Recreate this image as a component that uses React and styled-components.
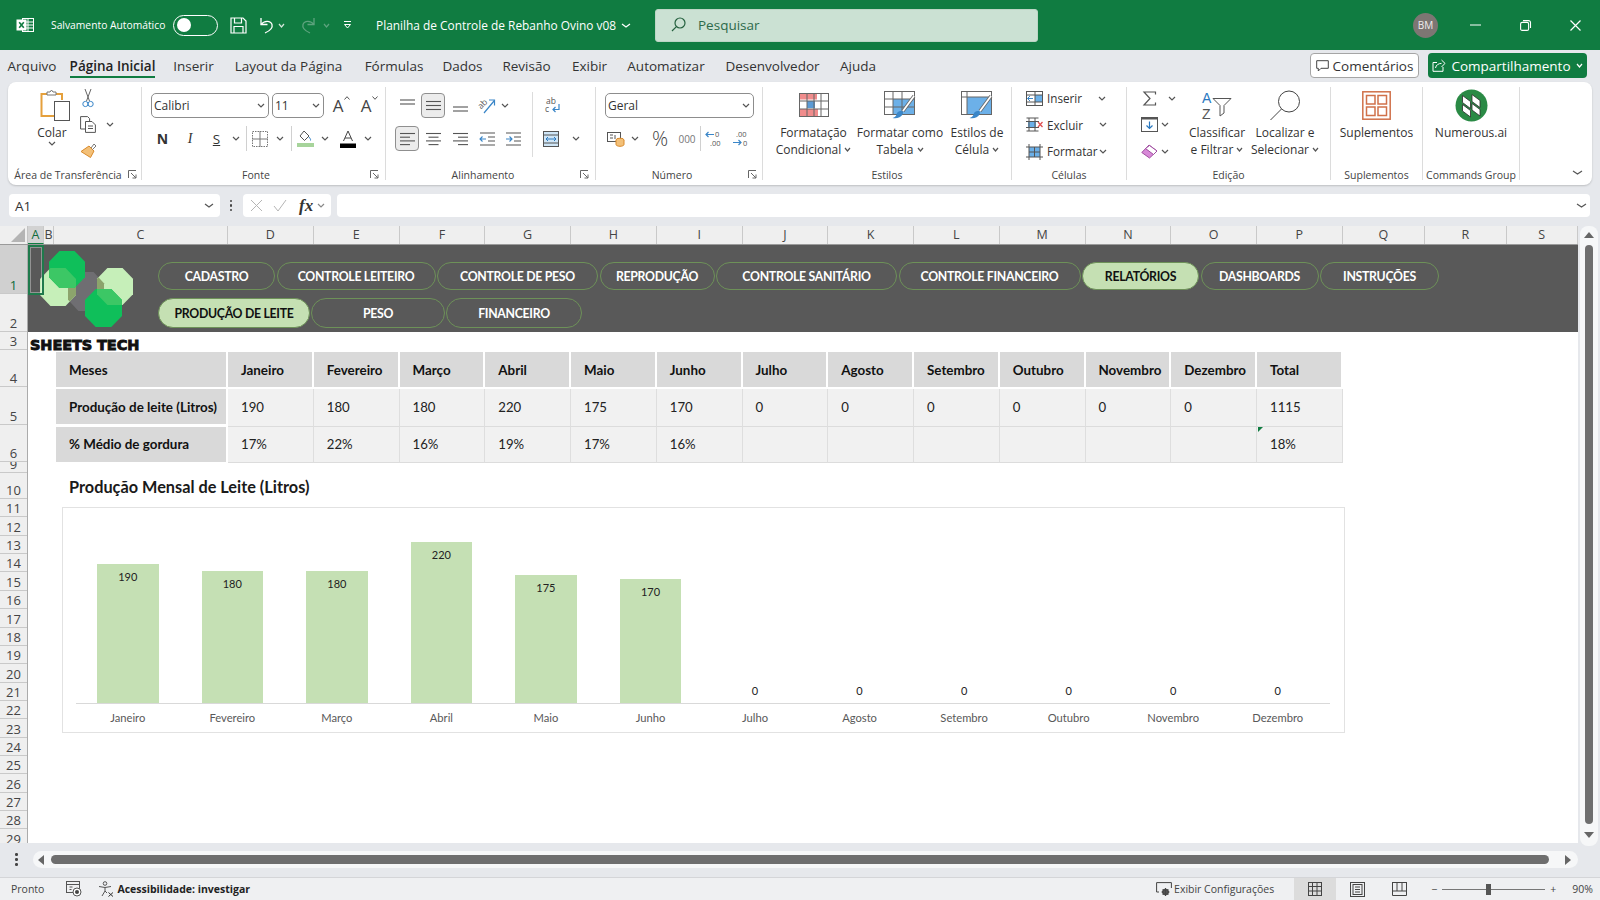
import React from 'react';
import styled, { createGlobalStyle } from 'styled-components';

const UI = `"Open Sans", "Noto Sans", "Liberation Sans", sans-serif`;
const CAL = `Lato, "Open Sans", "Liberation Sans", sans-serif`;
const GREEN = '#107c41';

const Global = createGlobalStyle`
  html, body { margin: 0; padding: 0; background: #e6e8ec; }
  * { box-sizing: border-box; }
  body { font-family: ${UI}; color: #333; }
`;

const Page = styled.div`
  width: 1600px; height: 900px; overflow: hidden; display: flex; flex-direction: column; background: #e6e8ec;
`;

/* ---------- icons ---------- */
const IconSvg = styled.svg`display: block; flex: none; overflow: visible;`;
const I = ({ w, h, c = '#555', sw = 1, children }) => (
  <IconSvg width={w} height={h} viewBox={`0 0 ${w} ${h}`} fill="none" stroke={c} strokeWidth={sw}>{children}</IconSvg>
);
const Chev = ({ c = '#555', w = 8 }) => (
  <I w={w} h={5} c={c} sw={1.2}><path d={`M1 1 L${w / 2} 4 L${w - 1} 1`} /></I>
);

const ExcelIcon = () => (
  <I w={18} h={16} c="#fff">
    <rect x="6.5" y="1.5" width="11" height="13" />
    <path d="M6 5h12M6 8h12M6 11h12M12 1v14" />
    <rect x="1" y="3" width="9" height="10" fill="#fff" />
    <path d="M3.2 5.2l4.6 5.6M7.8 5.2l-4.6 5.6" stroke={GREEN} strokeWidth="1.6" />
  </I>
);
const SaveIcon = () => (
  <I w={17} h={17} c="#fff" sw={1.2}>
    <path d="M1 1h12l3 3v12H1z" /><path d="M4.5 1v5h7V1M4 16V9.5h9V16" />
  </I>
);
const UndoIcon = ({ c = '#fff', flip }) => (
  <IconSvg width="18" height="17" viewBox="0 0 18 17" fill="none" stroke={c} strokeWidth="1.3" style={flip ? { transform: 'scaleX(-1)' } : undefined}>
    <path d="M5 1v6.5h6.5" /><path d="M5 7.5C8 3.5 14.5 3 16 7.5c1 3.5-2.5 6.5-7 8.5" />
  </IconSvg>
);
const CustomizeIcon = () => (
  <I w={9} h={10} c="#fff"><path d="M1 1.5h7" /><path d="M1.5 4.5h6L4.5 8z" fill="none" /></I>
);
const SearchIcon = () => (
  <I w={15} h={15} c="#25613f" sw={1.2}><circle cx="9" cy="6" r="5" /><path d="M5.4 9.6L1 14" /></I>
);
const MinIcon = () => <I w={11} h={2} c="#fff"><path d="M0 1h11" /></I>;
const RestoreIcon = () => (
  <I w={11} h={11} c="#fff" sw={1.1}><rect x="0.6" y="2.4" width="8" height="8" rx="1.5" /><path d="M3 .6h5.5a2 2 0 0 1 2 2V8" /></I>
);
const CloseIcon = () => <I w={11} h={11} c="#fff" sw={1.2}><path d="M.5.5l10 10M10.5.5l-10 10" /></I>;
const CommentIcon = () => (
  <I w={13} h={12} c="#444"><path d="M.7.7h11.6v7.6H5L2.3 11V8.3H.7z" /></I>
);
const ShareIcon = () => (
  <I w={14} h={13} c="#fff"><path d="M5 3.5H1v8.8h10V8" /><path d="M3.5 9c.5-3 3-4.6 6-4.6M9.5 1l3.5 3.4L9.5 8" /></I>
);
const PasteIcon = () => (
  <I w={30} h={32}>
    <path d="M8 5H1.5v22H14" stroke="#e5a03c" strokeWidth="2" />
    <path d="M15 5h7v6" stroke="#e5a03c" strokeWidth="2" />
    <path d="M7 6V3h3l1.5-2 1.5 2h3v3z" stroke="#777" fill="#fff" />
    <rect x="14.5" y="12.5" width="15" height="19" stroke="#555" fill="#fff" />
  </I>
);
const ScissorsIcon = () => (
  <I w={12} h={20} c="#666">
    <path d="M3 1l4.5 12M9 1L4.5 13" />
    <circle cx="3.4" cy="16" r="2.6" stroke="#3a86c8" /><circle cx="8.6" cy="16" r="2.6" stroke="#3a86c8" />
  </I>
);
const CopyIcon = () => (
  <I w={16} h={17} c="#555">
    <path d="M5 13H.6V.6h7l2 2V5" /><path d="M5.5 5.5h6.5l3.4 3.4v7.5H5.5z" fill="#fff" /><path d="M8 10h5M8 12.5h5" />
  </I>
);
const PainterIcon = () => (
  <I w={17} h={16}>
    <path d="M9 3l5 5-3.5 6.5L1 8.5z" fill="#f3c078" stroke="#d98a2b" />
    <path d="M11 5l3-4 2 2-3.5 3.5" stroke="#777" />
  </I>
);
const GrowIcon = ({ up }) => (
  <IconRow>
    <GlyphA>A</GlyphA>
    <I w={6} h={4} c="#555"><path d={up ? 'M.5 3.5L3 .7l2.5 2.8' : 'M.5.5L3 3.3 5.5.5'} /></I>
  </IconRow>
);
const BorderIcon = () => (
  <I w={16} h={16} c="#777">
    <rect x=".5" y=".5" width="15" height="15" strokeDasharray="1.5 1" /><path d="M8 0v16M0 8h16" />
  </I>
);
const FillIcon = () => (
  <I w={17} h={17} c="#555">
    <path d="M7 1l5 5-4.5 4.5L3 6z" /><path d="M12 7c1 1.5 2 2.5 1.5 3.5" stroke="#3a86c8" />
    <rect x="0" y="13" width="17" height="4" fill="#a7d49b" stroke="none" />
  </I>
);
const FontColorIcon = () => (
  <I w={16} h={18} c="#444">
    <path d="M3.5 11L8 1l4.5 10M5 8h6" />
    <rect x="0" y="13.5" width="16" height="4.5" fill="#000" stroke="none" />
  </I>
);
const LinesV = ({ ys }) => (
  <I w={15} h={15} c="#555" sw={1.1}>
    {ys.map(y => <path key={y} d={`M0 ${y}h15`} />)}
  </I>
);
const LinesH = ({ mode }) => {
  const seg = [15, 10, 15, 10];
  return (
    <I w={15} h={14} c="#555" sw={1.1}>
      {seg.map((l, i) => {
        const x = mode === 'left' ? 0 : mode === 'right' ? 15 - l : (15 - l) / 2;
        return <path key={i} d={`M${x} ${1.5 + i * 3.7}h${l}`} />;
      })}
    </I>
  );
};
const IndentIcon = ({ dir }) => (
  <I w={15} h={14} c="#555" sw={1.1}>
    <path d="M0 1h15M0 13h15M8 5h7M8 9h7" />
    <path d={dir === 'out' ? 'M6 7H0M2.5 4.5L0 7l2.5 2.5' : 'M0 7h6M3.5 4.5L6 7 3.5 9.5'} stroke="#3a86c8" />
  </I>
);
const OrientIcon = () => (
  <I w={18} h={18} c="#3a86c8" sw={1.2}>
    <IconText x="1" y="10" transform="rotate(-45 5 9)">ab</IconText>
    <path d="M6 16L16 4M11 3h5.5v5.5" />
  </I>
);
const WrapIcon = () => (
  <I w={15} h={17} c="#3a86c8" sw={1.2}>
    <IconText x="1" y="7">ab</IconText>
    <IconText x="0" y="15">c</IconText>
    <path d="M14 7v5.5H8M10.5 10L8 12.5l2.5 2.5" />
  </I>
);
const MergeIcon = () => (
  <I w={16} h={16} c="#555">
    <rect x=".5" y=".5" width="15" height="15" fill="#cfe6f7" /><path d="M0 4h16M0 12h16" />
    <path d="M3 8h10M5 6L3 8l2 2M11 6l2 2-2 2" stroke="#2a78bf" />
  </I>
);
const CurrencyIcon = () => (
  <I w={18} h={16} c="#555">
    <rect x=".5" y="1.5" width="13" height="9" />
    <path d="M3 4h3M3 7h3M8 4v4" />
    <ellipse cx="13" cy="9" rx="4" ry="1.8" fill="#f3c078" stroke="#d98a2b" />
    <path d="M9 9v4.5c0 1 1.8 1.8 4 1.8s4-.8 4-1.8V9" fill="#f3c078" stroke="#d98a2b" />
  </I>
);
const DecIcon = ({ inc }) => (
  <I w={17} h={17} c="#3a86c8" sw={1.2}>
    <IconText x={inc ? 3 : 9} y="7" $small>{inc ? '.00' : '0'}</IconText>
    <IconText x={inc ? 10 : 4} y="16" $small>{inc ? '0' : '.00'}</IconText>
    {inc ? <path d="M0 12.500h8M5.500 10L8 12.500 5.500 15" /> : <path d="M8 4.500H0M2.500 2L0 4.500 2.500 7" />}
  </I>
);
const CondFormatIcon = () => (
  <I w={30} h={24} c="#666">
    <rect x="12" y=".5" width="6" height="6" fill="#f08c8c" stroke="none" />
    <rect x="1" y=".5" width="11" height="6" fill="#f08c8c" stroke="none" />
    <rect x="8" y="8" width="8" height="7" fill="#5b9bd5" stroke="none" />
    <rect x="1" y="16" width="18" height="7" fill="#f08c8c" stroke="none" />
    <rect x=".5" y=".5" width="29" height="23" />
    <path d="M8 0v24M15 0v24M22 0v24M0 8h30M0 16h30" />
  </I>
);
const Brush = () => (
  <>
    <path d="M30 5L19 20" stroke="#666" strokeWidth="3.4" />
    <path d="M30 5L19 20" stroke="#fff" strokeWidth="1.8" />
    <path d="M18 20c-3-.5-5 1-5.5 3.5-.5 2-2 3-4 3.5 4 1 8.500-.5 10-3.500.7-1.500.5-2.500-.5-3.500z" fill="#3a86c8" stroke="none" />
  </>
);
const TableFmtIcon = () => (
  <I w={32} h={28} c="#666">
    <rect x="9" y="8" width="22" height="16" fill="#6cb0e8" stroke="none" />
    <rect x=".5" y=".5" width="30" height="23" />
    <path d="M9 0v24M18 0v24M0 8h31M0 16h31" />
    <Brush />
  </I>
);
const CellStyleIcon = () => (
  <I w={32} h={28} c="#666">
    <rect x="6" y="6" width="25" height="18" fill="#6cb0e8" stroke="none" />
    <rect x=".5" y=".5" width="30" height="23" /><path d="M0 6h31M6 0v24" />
    <Brush />
  </I>
);
const InsertIcon = () => (
  <I w={17} h={15} c="#555">
    <rect x=".5" y=".5" width="16" height="14" />
    <rect x="9" y="4" width="7" height="7" fill="#6cb0e8" stroke="none" />
    <path d="M0 4h17M0 11h17M9 0v15" />
    <path d="M7 7.500H1.500M4 5L1.500 7.500 4 10" stroke="#3a86c8" />
  </I>
);
const DeleteIcon = () => (
  <I w={17} h={15} c="#555">
    <rect x="2" y="4.500" width="8" height="6" fill="#6cb0e8" stroke="none" />
    <path d="M.5 1h12M.5 14h12M3 1v13M9 1v13M0 4.500h13M0 10.500h13" />
    <path d="M12 5l4.500 5M16.500 5L12 10" stroke="#e05252" strokeWidth="1.3" />
  </I>
);
const FormatIcon = () => (
  <I w={17} h={17} c="#555">
    <rect x="3" y="4" width="11" height="10" fill="#6cb0e8" stroke="none" />
    <path d="M3 1v16M14 1v16M0 4h17M0 14h17M8.500 4v10M3 9h11" />
  </I>
);
const SumIcon = () => <I w={13} h={15} c="#555" sw={1.2}><path d="M12.500 3.500V1H1l6 6.500L1 14h11.500v-2.500" /></I>;
const FillDownIcon = () => (
  <I w={17} h={15} c="#555">
    <rect x=".5" y="2" width="16" height="12.500" />
    <path d="M0 1h17" strokeWidth="2" />
    <path d="M8.500 4.500v7M5.500 8.500l3 3 3-3" stroke="#2a78bf" strokeWidth="1.2" />
  </I>
);
const EraserIcon = () => (
  <I w={17} h={15}>
    <path d="M.8 8.500L8 1l8 6-7.500 7z" fill="#d889d8" stroke="#a14ea1" />
    <path d="M5 4.500l8 5.500" stroke="#a14ea1" />
    <path d="M8.500 1.500L16 7l-3.500 3.500-8-6z" fill="#fff" stroke="#a14ea1" />
  </I>
);
const SortIcon = () => (
  <I w={30} h={28}>
    <IconLabel x="0" y="12" fill="#2a78bf" stroke="none">A</IconLabel>
    <IconLabel x="0" y="28" fill="#555" stroke="none">Z</IconLabel>
    <path d="M11 7.500h18l-7 7V22l-4 3V14.500z" stroke="#555" />
  </I>
);
const FindIcon = () => (
  <I w={31} h={31} c="#444">
    <circle cx="19" cy="11.500" r="10.500" /><path d="M11.500 19L.5 30" />
  </I>
);
const AddinIcon = () => (
  <I w={29} h={29} c="#d0714a" sw={1.5}>
    <rect x=".8" y=".8" width="27.400" height="27.400" />
    <rect x="4.500" y="4.500" width="8.500" height="8.500" /><rect x="16" y="4.500" width="8.500" height="8.500" />
    <rect x="4.500" y="16" width="8.500" height="8.500" /><rect x="16" y="16" width="8.500" height="8.500" />
  </I>
);
const NumerousIcon = () => (
  <I w={33} h={33}>
    <circle cx="16.500" cy="16.500" r="16" fill="#2a8a45" stroke="none" />
    <path d="M7.500 6.500l8 6v7l-8-6zM17 5.500l8 6v7l-8-6zM7.500 15.500l8 6v6.500l-8-6zM17 14.500l8 6v6.500l-8-6z" fill="#fff" stroke="#2b2b2b" strokeWidth=".8" />
  </I>
);
const Launcher = () => (
  <I w={9} h={9} c="#666"><path d="M.5 8V.5H8" /><path d="M3 3l5 5M8 4.500V8H4.500" /></I>
);
const MacroIcon = () => (
  <I w={16} h={16} c="#555">
    <rect x=".5" y=".5" width="13" height="11" /><path d="M0 3.500h14M3.500 6h3M3.500 8.500h2" />
    <circle cx="11" cy="11" r="4" fill="#fff" /><circle cx="11" cy="11" r="2" fill="#444" stroke="none" />
  </I>
);
const AccessIcon = () => (
  <I w={16} h={16} c="#555">
    <circle cx="7" cy="2.500" r="1.800" /><path d="M1 5.500l6 1 6-1M7 6.500V10L4 15M7 10l2 2" />
    <path d="M10.500 11.500l4.500 4M15 11.500l-4.500 4" stroke="#333" />
  </I>
);
const SettingsMonitor = () => (
  <I w={16} h={15} c="#444">
    <path d="M3 10H.6V.6h14.800V6" />
    <circle cx="9.500" cy="10" r="3" fill="#555" />
    <circle cx="9.500" cy="10" r="1" fill="#eee" stroke="none" />
    <path d="M9.500 6v8M5.500 10h8M6.700 7.200l5.600 5.600M12.300 7.200l-5.600 5.600" />
  </I>
);
const NormalView = () => (
  <I w={14} h={14} c="#444"><rect x=".5" y=".5" width="13" height="13" /><path d="M0 4.500h14M0 9h14M4.500 0v14M9 0v14" /></I>
);
const PageView = () => (
  <I w={15} h={15} c="#444"><rect x=".5" y=".5" width="14" height="14" /><rect x="3" y="2.500" width="9" height="10" /><path d="M5 5h5M5 7.500h5M5 10h5" /></I>
);
const BreakView = () => (
  <I w={15} h={14} c="#444"><path d="M.5 0v13.500h14V0M.5 .5h14M.5 9h14M5 .5V9M10 .5V9" /></I>
);
const oct = (x, y, w, h) => {
  const a = w * 0.29, b = h * 0.29;
  return `${x + a},${y} ${x + w - a},${y} ${x + w},${y + b} ${x + w},${y + h - b} ${x + w - a},${y + h} ${x + a},${y + h} ${x},${y + h - b} ${x},${y + b}`;
};
const LOGO = {
  grey: oct(28, 21, 36, 39),
  left: oct(0, 17, 36, 38),
  right: oct(57, 17, 36, 37),
  top: oct(9, 0, 36, 37),
  bottom: oct(45, 38, 37, 38),
};
const LogoIcon = () => (
  <IconSvg width="94" height="78" viewBox="0 0 94 78" stroke="none">
    <defs>
      <clipPath id="clipLeft"><polygon points={LOGO.left} /></clipPath>
      <clipPath id="clipRight"><polygon points={LOGO.right} /></clipPath>
    </defs>
    <polygon points={LOGO.grey} fill="#6f6e72" />
    <polygon points={LOGO.left} fill="#c6efb9" />
    <polygon points={LOGO.right} fill="#c6efb9" />
    <polygon points={LOGO.grey} fill="#8ca46c" clipPath="url(#clipLeft)" />
    <polygon points={LOGO.grey} fill="#8ca46c" clipPath="url(#clipRight)" />
    <polygon points={LOGO.top} fill="#0fbf5a" />
    <polygon points={LOGO.bottom} fill="#0fbf5a" />
    <polygon points={LOGO.top} fill="#3cc765" clipPath="url(#clipLeft)" />
    <polygon points={LOGO.bottom} fill="#3cc765" clipPath="url(#clipRight)" />
  </IconSvg>
);

const IconText = styled.text`
  font-family: ${UI}; font-size: ${p => (p.$small ? 7.5 : 8.5)}px; fill: #555; stroke: none;
`;
const IconLabel = styled.text`font-family: "Liberation Sans", sans-serif; font-size: 14px;`;
const IconRow = styled.span`display: inline-flex; align-items: flex-start; gap: 1px;`;
const GlyphA = styled.span`font-size: 17px; line-height: 20px; color: #444;`;

/* ---------- title bar ---------- */
const TitleBar = styled.div`
  height: 50px; flex: none; background: ${GREEN}; color: #fff; display: flex; align-items: center; padding-left: 16px;
`;
const TitleItem = styled.div`
  margin-left: ${p => p.$ml || 0}px; display: flex; align-items: center; flex: none;
`;
const AutoLabel = styled.span`font-size: 10.300px; color: #fff; white-space: nowrap; width: 113px;`;
const Toggle = styled.div`
  width: 45px; height: 21px; border: 1.5px solid #fff; border-radius: 11px; display: flex; align-items: center; padding-left: 3px;
`;
const Knob = styled.span`width: 14px; height: 14px; border-radius: 50%; background: #fff;`;
const DocTitle = styled.span`font-size: 11.900px; color: #fff; white-space: nowrap; width: 241px;`;
const SearchBox = styled.div`
  width: 383px; height: 33px; background: #cbe1d3; border-radius: 3px; display: flex; align-items: center; padding-left: 15px; gap: 12px;
  border: 1px solid #bcd5c5;
  color: #2d6a4a; font-size: 13.500px; line-height: 18px; padding-bottom: 1px;
`;
const Avatar = styled.div`
  width: 25px; height: 25px; border-radius: 50%; background: #7d7673; color: #eee; font-size: 10px;
  display: flex; align-items: center; justify-content: center;
`;

/* ---------- tabs ---------- */
const TabBar = styled.div`height: 32px; flex: none; display: flex; align-items: flex-start; position: relative;`;
const Tab = styled.div`
  width: ${p => p.$w}px; flex: none; display: flex; justify-content: center; padding-top: 6px;
`;
const TabLabel = styled.span`
  font-size: 13.500px; line-height: 20px; white-space: nowrap; color: #333;
  font-weight: ${p => (p.$active ? 600 : 400)};
  ${p => p.$active && `border-bottom: 2.5px solid ${GREEN}; color: #222;`}
`;
const TabActions = styled.div`margin-left: auto; display: flex; gap: 9px; padding: 3px 13px 0 0;`;
const CommentBtn = styled.div`
  width: 109px; height: 25px; background: #fff; border: 1px solid #a5a5a5; border-radius: 4px; display: flex; align-items: center;
  justify-content: center; gap: 4px; font-size: 13.500px; color: #333; white-space: nowrap;
`;
const ShareBtn = styled.div`
  width: 159px; height: 25px; background: ${GREEN}; border-radius: 4px; display: flex; align-items: center; justify-content: center;
  gap: 5px; font-size: 13.500px; color: #fff; white-space: nowrap;
`;

/* ---------- ribbon ---------- */
const Ribbon = styled.div`
  height: 103px; flex: none; margin: 0 8px; background: #fff; border-radius: 8px; display: flex; padding: 5px 0;
  box-shadow: 0 1px 2px rgba(0,0,0,.18);
`;
const Group = styled.div`
  width: ${p => p.$w}px; flex: none; height: 93px; border-right: 1px solid #dcdcdc; display: flex; flex-direction: column;
`;
const GroupBody = styled.div`flex: 1; display: flex; padding-left: ${p => p.$pl || 0}px; min-height: 0;`;
const GroupFoot = styled.div`height: 11px; display: flex; align-items: center; flex: none; padding-right: ${p => p.$pr || 0}px;`;
const GroupLabel = styled.span`flex: 1; text-align: center; font-size: 10.500px; color: #444; white-space: nowrap;`;
const RowStack = styled.div`
  display: flex; flex-direction: column; gap: 8px; padding-top: 6px; width: ${p => (p.$w ? `${p.$w}px` : 'auto')}; flex: none;
`;
const ToolRow = styled.div`display: flex; height: 25px; align-items: center;`;
const Tool = styled.div`
  width: ${p => p.$w}px; height: 25px; flex: none; display: flex; align-items: center; justify-content: center;
  margin-left: ${p => p.$ml || 0}px;
  ${p => p.$active && `background: #ececec; border: 1px solid #8f8f8f; border-radius: 4px;`}
`;
const BoldN = styled.span`font-weight: 700; font-size: 14px; color: #333;`;
const ItalicI = styled.span`font-style: italic; font-size: 14px; font-family: "Liberation Serif", serif; color: #333;`;
const UnderS = styled.span`text-decoration: underline; font-size: 13.500px; color: #333;`;
const ToolSep = styled.div`width: 1px; height: 25px; background: #d0d0d0; margin: 0 ${p => p.$m || 1}px; flex: none;`;
const Select = styled.div`
  width: ${p => p.$w}px; height: 25px; margin-left: ${p => p.$ml || 0}px; flex: none; border: 1px solid #8d8d8d; border-radius: 5px; display: flex; align-items: center;
  justify-content: space-between; padding: 0 3px 0 2px; font-size: 12px; color: #333; background: #fff;
`;
const VSep = styled.div`width: 1px; height: 65px; background: #dcdcdc; margin-top: 5px; flex: none;`;
const Large = styled.div`
  width: ${p => p.$w}px; flex: none; display: flex; flex-direction: column; align-items: center;
`;
const LargeIcon = styled.div`
  height: 36.500px; display: flex; align-items: center; justify-content: center; flex: none; margin-left: ${p => p.$ml || 0}px;
`;
const LargeText = styled.div`
  font-size: 12px; line-height: 17px; white-space: nowrap; color: #333; display: flex; align-items: center; gap: 3px;
`;
const SmallStack = styled.div`
  display: flex; flex-direction: column; gap: 4.500px; width: ${p => p.$w}px; flex: none; margin-left: ${p => p.$ml || 0}px;
`;
const SmallRow = styled.div`display: flex; height: 22px; align-items: center; font-size: 11.700px; color: #333; white-space: nowrap;`;
const SmallIconCell = styled.div`width: ${p => p.$w}px; flex: none; display: flex; justify-content: center;`;
const SmallText = styled.span`margin-left: 4px; width: ${p => p.$w}px; flex: none;`;
const PercentGlyph = styled.span`font-size: 20px; line-height: 25px; color: #444; font-weight: 300;`;
const ThousandGlyph = styled.span`font-size: 10px; color: #777;`;
const Collapse = styled.div`flex: 1; display: flex; align-items: flex-end; justify-content: flex-end; padding: 0 9px 5px 0;`;

/* ---------- formula bar ---------- */
const FormulaBar = styled.div`
  height: 23px; flex: none; margin: 9px 10px 9px 9px; display: flex; align-items: stretch;
`;
const NameBox = styled.div`
  width: 211px; background: #fff; border-radius: 4px; display: flex; align-items: center; justify-content: space-between;
  padding: 0 6px 0 6px; font-size: 13.500px; color: #333;
`;
const Dots = styled.div`
  width: 22px; display: flex; flex-direction: column; align-items: center; justify-content: center; gap: 2px;
`;
const Dot = styled.span`width: 2.500px; height: 2.500px; background: #444; border-radius: 50%;`;
const FxBox = styled.div`
  width: 88px; background: #fff; border-radius: 4px; display: flex; align-items: center; padding-left: 7px; margin-left: 1px;
`;
const FxGlyph = styled.span`
  font-family: "Liberation Serif", serif; font-style: italic; font-weight: 700; font-size: 17px; color: #333; margin: 0 4px 0 12px;
`;
const FormulaInput = styled.div`
  flex: 1; margin-left: 6px; background: #fff; border-radius: 4px; display: flex; align-items: center; justify-content: flex-end; padding-right: 3px;
`;

/* ---------- sheet ---------- */
const SheetArea = styled.div`height: 617px; flex: none; display: flex;`;
const SheetMain = styled.div`width: 1578px; flex: none; display: flex; flex-direction: column; overflow: hidden;`;
const ColHeaders = styled.div`height: 19px; flex: none; display: flex; background: #efefef; border-bottom: 1px solid #9a9a9a;`;
const Corner = styled.div`width: 28px; flex: none; border-right: 1px solid #c4c4c4; display: flex; align-items: flex-end; justify-content: flex-end; padding: 0 2px 2px 0;`;
const ColHead = styled.div`
  width: ${p => p.$w}px; flex: none; text-align: center; font-size: 12.500px; line-height: 18px; border-right: 1px solid #c9c9c9; color: #444;
  ${p => p.$on && `background: #d2d2d2; color: #0e6b3a; border-bottom: 1px solid ${GREEN};`}
`;
const SheetRow = styled.div`flex: 1; display: flex; min-height: 0;`;
const RowHeaders = styled.div`
  width: 28px; flex: none; display: flex; flex-direction: column; background: #efefef; border-right: 1px solid #ababab; overflow: hidden;
`;
const RowHead = styled.div`
  height: ${p => p.$h}px; flex: none; display: flex; align-items: flex-end; justify-content: center; font-size: 13px; line-height: 16px; color: #444;
  border-bottom: 1px solid #c9c9c9; overflow: hidden;
  ${p => p.$on && `background: #d0d0d0; color: #0e6b3a;`}
`;
const SheetBody = styled.div`flex: 1; background: #fff; min-width: 0; overflow: hidden;`;
const Banner = styled.div`
  height: 87px; background: #595959; display: flex; position: relative;
`;
const SelectedCell = styled.div`
  position: absolute; left: 0; top: 0; width: 16px; height: 50px; border: 2px solid #1f7a4c; outline: 1px solid rgba(255,255,255,.35); outline-offset: -3px;
`;
const LogoBox = styled.div`
  width: 130px; flex: none; padding: 6px 0 0 12px;
`;
const PillStack = styled.div`display: flex; flex-direction: column; gap: 8px; padding-top: 17px;`;
const PillRow = styled.div`display: flex; gap: ${p => p.$gap}px;`;
const Pill = styled.div`
  width: ${p => p.$w}px; height: ${p => p.$h || 28}px; flex: none; border-radius: 15px; display: flex; align-items: center; justify-content: center;
  border: 1.500px solid #6d9158; font-family: ${CAL}; font-weight: 700; font-size: 12.300px; letter-spacing: -.3px; white-space: nowrap;
  color: ${p => (p.$on ? '#111' : '#fff')}; background: ${p => (p.$on ? '#c5e0b3' : 'transparent')};
`;
const Brand = styled.div`
  height: 20px; padding: 3px 0 0 2px; font-family: "DejaVu Sans", sans-serif; font-weight: 700; font-size: 14.500px; line-height: 20px;
  color: #111; -webkit-text-stroke: .9px #111; letter-spacing: -.1px; white-space: nowrap;
`;
const DataTable = styled.div`
  margin-left: 28px; display: grid; grid-template-columns: 172px repeat(13, 85.750px); grid-template-rows: 37px 37.500px 36.500px;
  font-family: ${CAL}; font-size: 13.200px; color: #222; width: max-content;
`;
const HeadCell = styled.div`
  background: #d9d9d9; height: 35px; margin-right: 2px; padding-left: 13px; display: flex; align-items: center; font-weight: 700; font-size: 13.400px; color: #111;
`;
const DataCell = styled.div`
  background: #f1f1f1; border-right: 1px solid #dedede; border-bottom: 1px solid #dcdcdc; padding-left: 13px; display: flex; align-items: center; position: relative;
  ${p => p.$flag && `&::before { content: ""; position: absolute; left: 1px; top: 0; border-top: 5px solid #107c41; border-right: 5px solid transparent; }`}
`;
const ChartTitle = styled.div`
  margin: 13px 0 0 41px; font-family: ${CAL}; font-weight: 700; font-size: 16.300px; line-height: 22px; color: #1a1a1a; height: 22px;
`;
const Chart = styled.div`
  margin: 9px 0 0 34px; width: 1283px; height: 226px; border: 1px solid #e2e2e2; padding: 0 14px 0 12.500px; display: flex; flex-direction: column;
`;
const Plot = styled.div`
  height: 196px; flex: none; display: grid; grid-template-columns: repeat(12, 1fr); border-bottom: 1px solid #d9d9d9;
`;
const PlotCol = styled.div`display: flex; flex-direction: column; justify-content: flex-end; align-items: center;`;
const Bar = styled.div`
  width: 61.500px; background: #c5e0b4; text-align: center; padding-top: 7px;
`;
const BarValue = styled.div`font-family: ${CAL}; font-size: 11px; line-height: 12px; color: #222;`;
const ZeroValue = styled(BarValue)`margin-bottom: 6px;`;
const Cats = styled.div`display: grid; grid-template-columns: repeat(12, 1fr); padding-top: 7px;`;
const Cat = styled.div`text-align: center; font-family: ${CAL}; font-size: 11.200px; line-height: 14px; color: #595959;`;

const VScroll = styled.div`
  width: 22px; flex: none; padding: 0 2px 0 2px; display: flex;
`;
const VTrack = styled.div`
  flex: 1; background: #f6f7f8; border-radius: 8px; display: flex; flex-direction: column; align-items: center; padding-top: 6px; height: 620px;
`;
const VThumb = styled.div`width: 8px; height: 579px; background: #6e6e6e; border-radius: 4px; margin: 7px 0 8px;`;
const ArrowUp = styled.div`width: 0; height: 0; border-left: 5px solid transparent; border-right: 5px solid transparent; border-bottom: 6px solid #666;`;
const ArrowDown = styled(ArrowUp)`border-bottom: 0; border-top: 6px solid #666;`;

const HScrollRow = styled.div`height: 34px; flex: none; display: flex; align-items: flex-start; padding-top: 8px;`;
const HDots = styled.div`width: 33px; flex: none; height: 17px; display: flex; flex-direction: column; align-items: center; justify-content: center; gap: 2.500px;`;
const HTrack = styled.div`
  width: 1545px; height: 17px; flex: none; background: #f6f7f8; border-radius: 9px; display: flex; align-items: center; padding: 0 5px;
`;
const HThumb = styled.div`width: 1498px; height: 9px; background: #6e6e6e; border-radius: 5px; margin: 0 16px 0 7px; flex: none;`;
const ArrowLeft = styled.div`width: 0; height: 0; border-top: 5px solid transparent; border-bottom: 5px solid transparent; border-right: 6px solid #666; flex: none;`;
const ArrowRight = styled(ArrowLeft)`border-right: 0; border-left: 6px solid #666;`;

const StatusBar = styled.div`
  height: 23px; flex: none; background: #eff0f2; border-top: 1px solid #d4d5d8; display: flex; align-items: center; padding-left: 11px; font-size: 10.500px; color: #444;
`;
const StatusItem = styled.div`
  margin-left: ${p => p.$ml || 0}px; display: flex; align-items: center; gap: ${p => p.$gap || 0}px; white-space: nowrap; flex: none;
  font-weight: ${p => (p.$bold ? 700 : 400)}; color: ${p => (p.$bold ? '#222' : '#444')};
`;
const ViewBtn = styled.div`
  width: ${p => p.$w}px; height: 22px; display: flex; align-items: center; justify-content: center; flex: none; background: ${p => (p.$on ? '#dcdcdc' : 'transparent')};
`;
const Slider = styled.div`
  width: 103px; height: 1px; background: #777; position: relative; margin: 0 5px; flex: none;
`;
const SliderThumb = styled.span`
  position: absolute; left: 44px; top: -5px; width: 5px; height: 11px; background: #555;
`;

/* ---------- data ---------- */
const TABS = [['Arquivo', 64], ['Página Inicial', 97, true], ['Inserir', 65], ['Layout da Página', 125], ['Fórmulas', 86], ['Dados', 51], ['Revisão', 77], ['Exibir', 49], ['Automatizar', 104], ['Desenvolvedor', 109], ['Ajuda', 62]];
const COLS = [['A', 16, true], ['B', 10], ['C', 174], ...'DEFGHIJKLMNOP'.split('').map(c => [c, 85.75]), ['Q', 82], ['R', 82], ['S', 71]];
const ROWS = [[1, 49, true], [2, 38], [3, 18], [4, 37], [5, 38], [6, 37], [9, 11], [10, 26], ...Array.from({ length: 19 }, (_, i) => [11 + i, 18.36])];
const NAV1 = [['CADASTRO', 117], ['CONTROLE LEITEIRO', 159], ['CONTROLE DE PESO', 161], ['REPRODUÇÃO', 115], ['CONTROLE SANITÁRIO', 181], ['CONTROLE FINANCEIRO', 182], ['RELATÓRIOS', 117, true], ['DASHBOARDS', 118], ['INSTRUÇÕES', 119]];
const NAV2 = [['PRODUÇÃO DE LEITE', 152, true], ['PESO', 134], ['FINANCEIRO', 136]];
const MONTHS = ['Janeiro', 'Fevereiro', 'Março', 'Abril', 'Maio', 'Junho', 'Julho', 'Agosto', 'Setembro', 'Outubro', 'Novembro', 'Dezembro'];
const MILK = [190, 180, 180, 220, 175, 170, 0, 0, 0, 0, 0, 0];
const FAT = ['17%', '22%', '16%', '19%', '17%', '16%', '', '', '', '', '', ''];

const Foot = ({ label, launcher, pr }) => (
  <GroupFoot $pr={pr}>
    <GroupLabel>{label}</GroupLabel>
    {launcher && <Launcher />}
  </GroupFoot>
);

export default function App() {
  return (
    <Page>
      <Global />
      <TitleBar>
        <TitleItem><ExcelIcon /></TitleItem>
        <TitleItem $ml={17}><AutoLabel>Salvamento Automático</AutoLabel></TitleItem>
        <TitleItem $ml={9}><Toggle><Knob /></Toggle></TitleItem>
        <TitleItem $ml={12}><SaveIcon /></TitleItem>
        <TitleItem $ml={9}><UndoIcon /></TitleItem>
        <TitleItem $ml={4}><Chev c="#d5e6db" w={7} /></TitleItem>
        <TitleItem $ml={16}><UndoIcon c="#5ea37e" flip /></TitleItem>
        <TitleItem $ml={4}><Chev c="#5ea37e" w={7} /></TitleItem>
        <TitleItem $ml={13}><CustomizeIcon /></TitleItem>
        <TitleItem $ml={24}><DocTitle>Planilha de Controle de Rebanho Ovino v08</DocTitle></TitleItem>
        <TitleItem $ml={4}><Chev c="#fff" w={10} /></TitleItem>
        <TitleItem $ml={24}><SearchBox><SearchIcon />Pesquisar</SearchBox></TitleItem>
        <TitleItem $ml={375}><Avatar>BM</Avatar></TitleItem>
        <TitleItem $ml={32}><MinIcon /></TitleItem>
        <TitleItem $ml={39}><RestoreIcon /></TitleItem>
        <TitleItem $ml={39}><CloseIcon /></TitleItem>
      </TitleBar>

      <TabBar>
        {TABS.map(([t, w, a]) => <Tab key={t} $w={w}><TabLabel $active={a}>{t}</TabLabel></Tab>)}
        <TabActions>
          <CommentBtn><CommentIcon />Comentários</CommentBtn>
          <ShareBtn><ShareIcon />Compartilhamento<Chev c="#fff" w={7} /></ShareBtn>
        </TabActions>
      </TabBar>

      <Ribbon>
        <Group $w={134}>
          <GroupBody $pl={18}>
            <Large $w={52}>
              <LargeIcon $ml={5}><PasteIcon /></LargeIcon>
              <LargeText>Colar</LargeText>
              <LargeText><Chev /></LargeText>
            </Large>
            <SmallStack $w={44}>
              <SmallRow><SmallIconCell $w={20}><ScissorsIcon /></SmallIconCell></SmallRow>
              <SmallRow><SmallIconCell $w={20}><CopyIcon /></SmallIconCell><SmallIconCell $w={24}><Chev /></SmallIconCell></SmallRow>
              <SmallRow><SmallIconCell $w={20}><PainterIcon /></SmallIconCell></SmallRow>
            </SmallStack>
          </GroupBody>
          <Foot label="Área de Transferência" launcher pr={4} />
        </Group>

        <Group $w={244}>
          <GroupBody $pl={9}>
            <RowStack>
              <ToolRow>
                <Select $w={118}>Calibri<Chev /></Select>
                <Select $w={52} $ml={3}>11<Chev /></Select>
                <Tool $w={25} $ml={5}><GrowIcon up /></Tool>
                <Tool $w={25} $ml={3}><GrowIcon /></Tool>
              </ToolRow>
              <ToolRow>
                <Tool $w={23}><BoldN>N</BoldN></Tool>
                <Tool $w={32}><ItalicI>I</ItalicI></Tool>
                <Tool $w={21}><UnderS>S</UnderS></Tool>
                <Tool $w={18}><Chev /></Tool>
                <ToolSep />
                <Tool $w={24}><BorderIcon /></Tool>
                <Tool $w={16}><Chev /></Tool>
                <ToolSep $m={2.5} />
                <Tool $w={22}><FillIcon /></Tool>
                <Tool $w={18}><Chev /></Tool>
                <Tool $w={28}><FontColorIcon /></Tool>
                <Tool $w={12}><Chev /></Tool>
              </ToolRow>
            </RowStack>
          </GroupBody>
          <Foot label="Fonte" launcher pr={6} />
        </Group>

        <Group $w={210}>
          <GroupBody $pl={9}>
            <RowStack $w={137}>
              <ToolRow>
                <Tool $w={24}><LinesV ys={[2, 6]} /></Tool>
                <Tool $w={24} $ml={2} $active><LinesV ys={[3.500, 7.500, 11.500]} /></Tool>
                <Tool $w={24} $ml={3}><LinesV ys={[9, 13]} /></Tool>
                <Tool $w={22} $ml={4}><OrientIcon /></Tool>
                <Tool $w={14}><Chev /></Tool>
              </ToolRow>
              <ToolRow>
                <Tool $w={24} $active><LinesH mode="left" /></Tool>
                <Tool $w={24} $ml={2}><LinesH mode="center" /></Tool>
                <Tool $w={24} $ml={3}><LinesH mode="right" /></Tool>
                <Tool $w={24} $ml={3}><IndentIcon dir="out" /></Tool>
                <Tool $w={24} $ml={2}><IndentIcon dir="in" /></Tool>
              </ToolRow>
            </RowStack>
            <VSep />
            <RowStack>
              <ToolRow><Tool $w={24} $ml={7}><WrapIcon /></Tool></ToolRow>
              <ToolRow>
                <Tool $w={24} $ml={6}><MergeIcon /></Tool>
                <Tool $w={16} $ml={5}><Chev /></Tool>
              </ToolRow>
            </RowStack>
          </GroupBody>
          <Foot label="Alinhamento" launcher pr={6} />
        </Group>

        <Group $w={167}>
          <GroupBody $pl={9}>
            <RowStack>
              <ToolRow><Select $w={149}>Geral<Chev /></Select></ToolRow>
              <ToolRow>
                <Tool $w={22}><CurrencyIcon /></Tool>
                <Tool $w={16}><Chev /></Tool>
                <Tool $w={30} $ml={2}><PercentGlyph>%</PercentGlyph></Tool>
                <Tool $w={24}><ThousandGlyph>000</ThousandGlyph></Tool>
                <ToolSep $m={1} />
                <Tool $w={24}><DecIcon /></Tool>
                <Tool $w={26} $ml={2}><DecIcon inc /></Tool>
              </ToolRow>
            </RowStack>
          </GroupBody>
          <Foot label="Número" launcher pr={5} />
        </Group>

        <Group $w={249}>
          <GroupBody $pl={8}>
            <Large $w={85}>
              <LargeIcon><CondFormatIcon /></LargeIcon>
              <LargeText>Formatação</LargeText>
              <LargeText>Condicional<Chev w={7} /></LargeText>
            </Large>
            <Large $w={88}>
              <LargeIcon><TableFmtIcon /></LargeIcon>
              <LargeText>Formatar como</LargeText>
              <LargeText>Tabela<Chev w={7} /></LargeText>
            </Large>
            <Large $w={66}>
              <LargeIcon><CellStyleIcon /></LargeIcon>
              <LargeText>Estilos de</LargeText>
              <LargeText>Célula<Chev w={7} /></LargeText>
            </Large>
          </GroupBody>
          <Foot label="Estilos" />
        </Group>

        <Group $w={115}>
          <GroupBody $pl={14}>
            <SmallStack $w={95}>
              <SmallRow><InsertIcon /><SmallText $w={51}>Inserir</SmallText><Chev /></SmallRow>
              <SmallRow><DeleteIcon /><SmallText $w={52}>Excluir</SmallText><Chev /></SmallRow>
              <SmallRow><FormatIcon /><SmallText $w={52}>Formatar</SmallText><Chev /></SmallRow>
            </SmallStack>
          </GroupBody>
          <Foot label="Células" />
        </Group>

        <Group $w={204}>
          <GroupBody $pl={12}>
            <SmallStack $w={45}>
              <SmallRow><SmallIconCell $w={20}><SumIcon /></SmallIconCell><SmallIconCell $w={25}><Chev /></SmallIconCell></SmallRow>
              <SmallRow><SmallIconCell $w={20}><FillDownIcon /></SmallIconCell><SmallIconCell $w={12}><Chev /></SmallIconCell></SmallRow>
              <SmallRow><SmallIconCell $w={20}><EraserIcon /></SmallIconCell><SmallIconCell $w={12}><Chev /></SmallIconCell></SmallRow>
            </SmallStack>
            <Large $w={66}>
              <LargeIcon><SortIcon /></LargeIcon>
              <LargeText>Classificar</LargeText>
              <LargeText>e Filtrar<Chev w={7} /></LargeText>
            </Large>
            <Large $w={70}>
              <LargeIcon><FindIcon /></LargeIcon>
              <LargeText>Localizar e</LargeText>
              <LargeText>Selecionar<Chev w={7} /></LargeText>
            </Large>
          </GroupBody>
          <Foot label="Edição" />
        </Group>

        <Group $w={92}>
          <GroupBody>
            <Large $w={91}>
              <LargeIcon><AddinIcon /></LargeIcon>
              <LargeText>Suplementos</LargeText>
            </Large>
          </GroupBody>
          <Foot label="Suplementos" />
        </Group>

        <Group $w={97}>
          <GroupBody>
            <Large $w={96}>
              <LargeIcon><NumerousIcon /></LargeIcon>
              <LargeText>Numerous.ai</LargeText>
            </Large>
          </GroupBody>
          <Foot label="Commands Group" />
        </Group>
        <Collapse><Chev w={11} /></Collapse>
      </Ribbon>

      <FormulaBar>
        <NameBox>A1<Chev w={10} /></NameBox>
        <Dots><Dot /><Dot /><Dot /></Dots>
        <FxBox>
          <I w={13} h={13} c="#b5b5b5"><path d="M1 1l11 11M12 1L1 12" /></I>
          <TitleItem $ml={10}><I w={14} h={13} c="#b5b5b5"><path d="M1 7l4 5 8-11" /></I></TitleItem>
          <FxGlyph>fx</FxGlyph>
          <Chev c="#888" />
        </FxBox>
        <FormulaInput><Chev w={11} /></FormulaInput>
      </FormulaBar>

      <SheetArea>
        <SheetMain>
          <ColHeaders>
            <Corner>
              <I w={14} h={14} c="none"><path d="M14 0v14H0z" fill="#b4b4b4" stroke="none" /></I>
            </Corner>
            {COLS.map(([c, w, on]) => <ColHead key={c} $w={w} $on={on}>{c}</ColHead>)}
          </ColHeaders>
          <SheetRow>
            <RowHeaders>
              {ROWS.map(([r, h, on]) => <RowHead key={r} $h={h} $on={on}>{r}</RowHead>)}
            </RowHeaders>
            <SheetBody>
              <Banner>
                <SelectedCell />
                <LogoBox><LogoIcon /></LogoBox>
                <PillStack>
                  <PillRow $gap={1.5}>{NAV1.map(([t, w, on]) => <Pill key={t} $w={w} $on={on}>{t}</Pill>)}</PillRow>
                  <PillRow $gap={1}>{NAV2.map(([t, w, on]) => <Pill key={t} $w={w} $h={30} $on={on}>{t}</Pill>)}</PillRow>
                </PillStack>
              </Banner>
              <Brand>SHEETS TECH</Brand>
              <DataTable>
                <HeadCell>Meses</HeadCell>
                {MONTHS.map(m => <HeadCell key={m}>{m}</HeadCell>)}
                <HeadCell>Total</HeadCell>
                <HeadCell>Produção de leite (Litros)</HeadCell>
                {MILK.map((v, i) => <DataCell key={i}>{v}</DataCell>)}
                <DataCell>1115</DataCell>
                <HeadCell>% Médio de gordura</HeadCell>
                {FAT.map((v, i) => <DataCell key={i}>{v}</DataCell>)}
                <DataCell $flag>18%</DataCell>
              </DataTable>
              <ChartTitle>Produção Mensal de Leite (Litros)</ChartTitle>
              <Chart>
                <Plot>
                  {MILK.map((v, i) => (
                    <PlotCol key={i}>
                      {v > 0
                        ? <Bar style={{ height: `${v * 0.732}px` }}><BarValue>{v}</BarValue></Bar>
                        : <ZeroValue>{v}</ZeroValue>}
                    </PlotCol>
                  ))}
                </Plot>
                <Cats>{MONTHS.map(m => <Cat key={m}>{m}</Cat>)}</Cats>
              </Chart>
            </SheetBody>
          </SheetRow>
        </SheetMain>
        <VScroll>
          <VTrack><ArrowUp /><VThumb /><ArrowDown /></VTrack>
        </VScroll>
      </SheetArea>

      <HScrollRow>
        <HDots><Dot /><Dot /><Dot /></HDots>
        <HTrack><ArrowLeft /><HThumb /><ArrowRight /></HTrack>
      </HScrollRow>

      <StatusBar>
        <StatusItem>Pronto</StatusItem>
        <StatusItem $ml={22}><MacroIcon /></StatusItem>
        <StatusItem $ml={16} $gap={3} $bold><AccessIcon />Acessibilidade: investigar</StatusItem>
        <StatusItem $ml={906} $gap={2}><SettingsMonitor />Exibir Configurações</StatusItem>
        <StatusItem $ml={20}>
          <ViewBtn $w={42} $on><NormalView /></ViewBtn>
          <ViewBtn $w={42}><PageView /></ViewBtn>
          <ViewBtn $w={42}><BreakView /></ViewBtn>
        </StatusItem>
        <StatusItem $ml={11}>−<Slider><SliderThumb /></Slider>+</StatusItem>
        <StatusItem $ml={16}>90%</StatusItem>
      </StatusBar>
    </Page>
  );
}
